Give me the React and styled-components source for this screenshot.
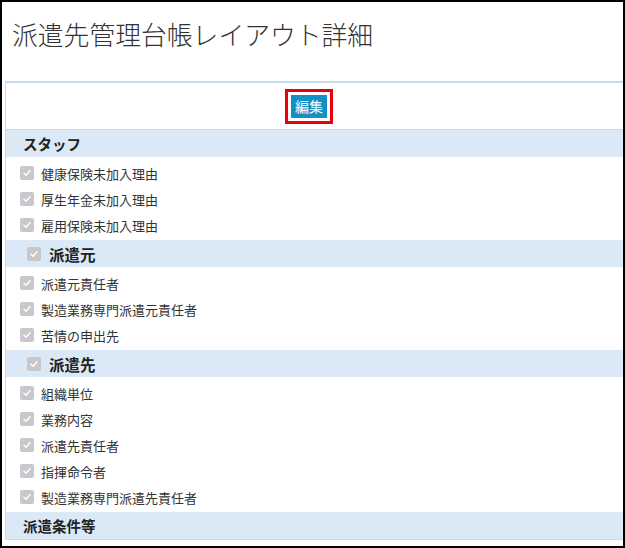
import React from "react";
import styled, { createGlobalStyle } from "styled-components";

const Global = createGlobalStyle`
  html, body { margin: 0; padding: 0; background: #fff; }
  body { font-family: "Noto Sans CJK JP", "Noto Sans", sans-serif; color: #333; }
`;

const Frame = styled.div`
  width: 625px;
  height: 548px;
  box-sizing: border-box;
  border: 2px solid #000;
  overflow: hidden;
  background: #fff;
`;

const Title = styled.h1`
  margin: 16px 0 0 10px;
  height: 63px;
  font-size: 25.8px;
  line-height: 32px;
  font-weight: 300;
  color: #333;
`;

const Panel = styled.div`
  margin-left: 3px;
  margin-right: -4px;
  border: 1px solid #c5dcf0;
  border-top: 2px solid #c5dcf0;
`;

const Toolbar = styled.div`
  height: 46px;
  display: flex;
  align-items: center;
  justify-content: center;
  padding-right: 14px;
  border-bottom: 1px solid #c5dcf0;
`;

const Highlight = styled.div`
  border: 3px solid #e8000d;
  padding: 3px;
  display: flex;
`;

const EditButton = styled.button`
  height: 23px;
  padding: 0 4px;
  border: none;
  background: #1590c5;
  color: #fff;
  font-family: "Noto Sans CJK JP", sans-serif;
  font-size: 14px;
  line-height: 23px;
  cursor: pointer;
`;

const SectionHeader = styled.div`
  height: 27px;
  display: flex;
  align-items: center;
  gap: 8px;
  padding-left: ${(p) => (p.$check ? "21px" : "17px")};
  background: #dbe9f7;
  font-size: ${(p) => (p.$check ? "15.5px" : "14.5px")};
  font-weight: 700;
  color: #222;
`;

const List = styled.ul`
  list-style: none;
  margin: 0;
  padding: 3px 0 2px 14px;
`;

const Item = styled.li`
  height: 26px;
  display: flex;
  align-items: center;
  gap: 7px;
  font-size: 13px;
  color: #333;
`;

const Box = styled.span`
  width: 14px;
  height: 14px;
  border-radius: 2px;
  background: #c8c8cc;
  display: inline-flex;
  align-items: center;
  justify-content: center;
  flex: none;
`;

const Check = () => (
  <Box>
    <svg width="10" height="10" viewBox="0 0 10 10">
      <path d="M2 5.2 L4.1 7.2 L8 2.8" fill="none" stroke="#fff" strokeWidth="1.5" strokeLinecap="round" strokeLinejoin="round" />
    </svg>
  </Box>
);

const sections = [
  { title: "スタッフ", check: false, items: ["健康保険未加入理由", "厚生年金未加入理由", "雇用保険未加入理由"] },
  { title: "派遣元", check: true, items: ["派遣元責任者", "製造業務専門派遣元責任者", "苦情の申出先"] },
  { title: "派遣先", check: true, items: ["組織単位", "業務内容", "派遣先責任者", "指揮命令者", "製造業務専門派遣先責任者"] },
  { title: "派遣条件等", check: false, items: [] },
];

export default function App() {
  return (
    <>
      <Global />
      <Frame>
        <Title>派遣先管理台帳レイアウト詳細</Title>
        <Panel>
          <Toolbar>
            <Highlight>
              <EditButton>編集</EditButton>
            </Highlight>
          </Toolbar>
          {sections.map((s) => (
            <section key={s.title}>
              <SectionHeader $check={s.check}>
                {s.check && <Check />}
                <span>{s.title}</span>
              </SectionHeader>
              {s.items.length > 0 && (
                <List>
                  {s.items.map((it) => (
                    <Item key={it}>
                      <Check />
                      <span>{it}</span>
                    </Item>
                  ))}
                </List>
              )}
            </section>
          ))}
        </Panel>
      </Frame>
    </>
  );
}
